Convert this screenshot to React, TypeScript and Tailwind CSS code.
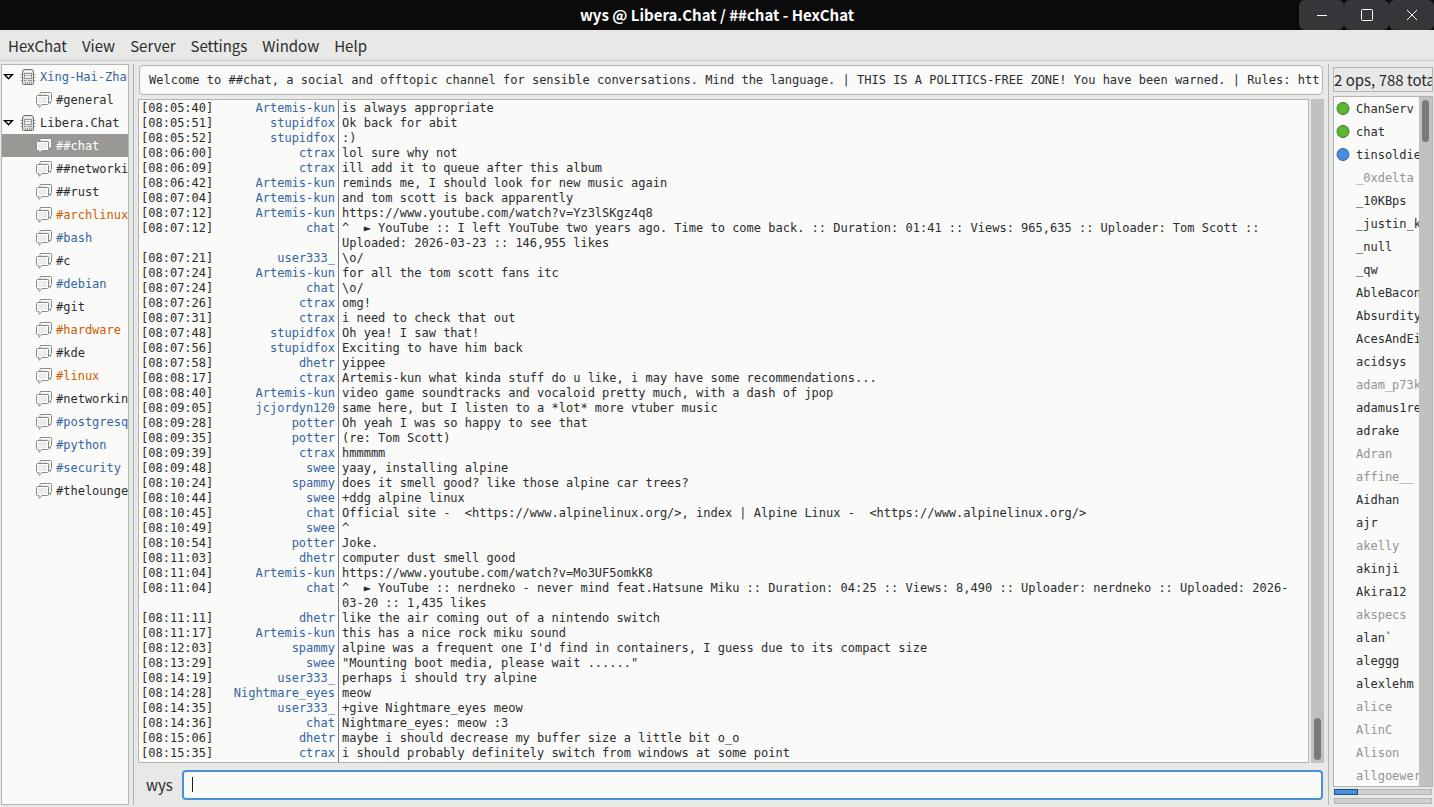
import { useState } from "react";

type Tone = "normal" | "data" | "message" | "selected";
type Channel = { name: string; tone: Tone };
type Network = { name: string; tone: Tone; channels: Channel[] };
type User = { name: string; away?: boolean; badge?: "op" | "voice" };

const toneClass: Record<Tone, string> = {
  normal: "text-[#2a2c2e]",
  data: "text-[#3465a4]",
  message: "text-[#ce5c00]",
  selected: "bg-[#9a9894] text-white",
};

const menus = ["HexChat", "View", "Server", "Settings", "Window", "Help"];

const networks: Network[] = [
  { name: "Xing-Hai-Zhan", tone: "data", channels: [{ name: "#general", tone: "normal" }] },
  {
    name: "Libera.Chat",
    tone: "normal",
    channels: [
      { name: "##chat", tone: "selected" },
      { name: "##networking", tone: "normal" },
      { name: "##rust", tone: "normal" },
      { name: "#archlinux", tone: "message" },
      { name: "#bash", tone: "data" },
      { name: "#c", tone: "normal" },
      { name: "#debian", tone: "data" },
      { name: "#git", tone: "normal" },
      { name: "#hardware", tone: "message" },
      { name: "#kde", tone: "normal" },
      { name: "#linux", tone: "message" },
      { name: "#networking", tone: "normal" },
      { name: "#postgresql", tone: "data" },
      { name: "#python", tone: "data" },
      { name: "#security", tone: "data" },
      { name: "#thelounge", tone: "normal" },
    ],
  },
];

const messages: [string, string, string][] = [
  ["08:05:40", "Artemis-kun", "is always appropriate"],
  ["08:05:51", "stupidfox", "Ok back for abit"],
  ["08:05:52", "stupidfox", ":)"],
  ["08:06:00", "ctrax", "lol sure why not"],
  ["08:06:09", "ctrax", "ill add it to queue after this album"],
  ["08:06:42", "Artemis-kun", "reminds me, I should look for new music again"],
  ["08:07:04", "Artemis-kun", "and tom scott is back apparently"],
  ["08:07:12", "Artemis-kun", "https://www.youtube.com/watch?v=Yz3lSKgz4q8"],
  ["08:07:12", "chat", "^  ► YouTube :: I left YouTube two years ago. Time to come back. :: Duration: 01:41 :: Views: 965,635 :: Uploader: Tom Scott :: Uploaded: 2026-03-23 :: 146,955 likes"],
  ["08:07:21", "user333_", "\\o/"],
  ["08:07:24", "Artemis-kun", "for all the tom scott fans itc"],
  ["08:07:24", "chat", "\\o/"],
  ["08:07:26", "ctrax", "omg!"],
  ["08:07:31", "ctrax", "i need to check that out"],
  ["08:07:48", "stupidfox", "Oh yea! I saw that!"],
  ["08:07:56", "stupidfox", "Exciting to have him back"],
  ["08:07:58", "dhetr", "yippee"],
  ["08:08:17", "ctrax", "Artemis-kun what kinda stuff do u like, i may have some recommendations..."],
  ["08:08:40", "Artemis-kun", "video game soundtracks and vocaloid pretty much, with a dash of jpop"],
  ["08:09:05", "jcjordyn120", "same here, but I listen to a *lot* more vtuber music"],
  ["08:09:28", "potter", "Oh yeah I was so happy to see that"],
  ["08:09:35", "potter", "(re: Tom Scott)"],
  ["08:09:39", "ctrax", "hmmmmm"],
  ["08:09:48", "swee", "yaay, installing alpine"],
  ["08:10:24", "spammy", "does it smell good? like those alpine car trees?"],
  ["08:10:44", "swee", "+ddg alpine linux"],
  ["08:10:45", "chat", "Official site -  <https://www.alpinelinux.org/>, index | Alpine Linux -  <https://www.alpinelinux.org/>"],
  ["08:10:49", "swee", "^"],
  ["08:10:54", "potter", "Joke."],
  ["08:11:03", "dhetr", "computer dust smell good"],
  ["08:11:04", "Artemis-kun", "https://www.youtube.com/watch?v=Mo3UF5omkK8"],
  ["08:11:04", "chat", "^  ► YouTube :: nerdneko - never mind feat.Hatsune Miku :: Duration: 04:25 :: Views: 8,490 :: Uploader: nerdneko :: Uploaded: 2026-03-20 :: 1,435 likes"],
  ["08:11:11", "dhetr", "like the air coming out of a nintendo switch"],
  ["08:11:17", "Artemis-kun", "this has a nice rock miku sound"],
  ["08:12:03", "spammy", "alpine was a frequent one I'd find in containers, I guess due to its compact size"],
  ["08:13:29", "swee", "\"Mounting boot media, please wait ......\""],
  ["08:14:19", "user333_", "perhaps i should try alpine"],
  ["08:14:28", "Nightmare_eyes", "meow"],
  ["08:14:35", "user333_", "+give Nightmare_eyes meow"],
  ["08:14:36", "chat", "Nightmare_eyes: meow :3"],
  ["08:15:06", "dhetr", "maybe i should decrease my buffer size a little bit o_o"],
  ["08:15:35", "ctrax", "i should probably definitely switch from windows at some point"],
];

const users: User[] = [
  { name: "ChanServ", badge: "op" },
  { name: "chat", badge: "op" },
  { name: "tinsoldier", badge: "voice" },
  { name: "_0xdelta", away: true },
  { name: "_10KBps" },
  { name: "_justin_k" },
  { name: "_null" },
  { name: "_qw" },
  { name: "AbleBacon" },
  { name: "Absurdity" },
  { name: "AcesAndEi" },
  { name: "acidsys" },
  { name: "adam_p73k", away: true },
  { name: "adamus1re" },
  { name: "adrake" },
  { name: "Adran", away: true },
  { name: "affine__", away: true },
  { name: "Aidhan" },
  { name: "ajr" },
  { name: "akelly", away: true },
  { name: "akinji" },
  { name: "Akira12" },
  { name: "akspecs", away: true },
  { name: "alan`" },
  { name: "aleggg" },
  { name: "alexlehm" },
  { name: "alice", away: true },
  { name: "AlinC", away: true },
  { name: "Alison", away: true },
  { name: "allgoewer", away: true },
];

function Expander() {
  return (
    <svg className="ml-[1px] h-[10px] w-[11px] shrink-0" viewBox="0 0 11 10" aria-hidden="true">
      <path d="M1.6 2.6h7.8L5.5 6.8z" fill="#fff" stroke="#000" strokeWidth="1.4" />
    </svg>
  );
}

function ServerIcon() {
  return (
    <svg className="h-4 w-4 shrink-0" viewBox="0 0 16 16" fill="none" aria-hidden="true">
      <path d="M.5 5.5H2M14 5.5h1.5M.5 8.5H2M14 8.5h1.5M.5 11.5H2M14 11.5h1.5" stroke="#a4a6a2" />
      <path d="M2.5 3a2.5 2.5 0 0 1 2.5-2.5h6A2.5 2.5 0 0 1 13.5 3v11.5a1 1 0 0 1-1 1h-9a1 1 0 0 1-1-1z" fill="#dededc" stroke="#6c6e6a" />
      <path d="M4 2.5h8" stroke="#f8f8f7" />
      <rect x="4.5" y="4.5" width="7" height="5" fill="#f1f1ef" stroke="#969894" />
      <path d="M5 6.5h6" stroke="#b4b6b2" />
      <path d="M4 11.5h2M8 11.5h4" stroke="#8c8e8a" />
      <path d="M5.5 13v2M7.5 13v2M9.5 13v2M11.5 13v2" stroke="#a0a29e" />
    </svg>
  );
}

function ChannelIcon() {
  return (
    <svg className="h-4 w-4 shrink-0" viewBox="0 0 16 16" aria-hidden="true">
      <path d="M5 .5h9.5a1 1 0 0 1 1 1v7a1 1 0 0 1-1 1v2l-2-2H5a1 1 0 0 1-1-1v-7a1 1 0 0 1 1-1z" fill="#fff" stroke="#888a85" />
      <path d="M5.5 2h8.5v6H5.5z" fill="#e9e9e7" />
      <path d="M1.5 3.5h10a1 1 0 0 1 1 1v7a1 1 0 0 1-1 1H6l-3 2.8v-2.8H1.5a1 1 0 0 1-1-1v-7a1 1 0 0 1 1-1z" fill="#fff" stroke="#888a85" />
      <path d="M2 5h9v6H2z" fill="#ececea" />
    </svg>
  );
}

function Badge({ kind }: { kind: "op" | "voice" }) {
  return (
    <svg className="h-[14px] w-[14px]" viewBox="0 0 14 14" aria-hidden="true">
      <circle
        cx="7"
        cy="6.5"
        r="6"
        fill={kind === "op" ? "#5cb531" : "#478ddf"}
        stroke={kind === "op" ? "#3f7a26" : "#3866a0"}
      />
    </svg>
  );
}

function TitleBar() {
  const button = "flex h-[30px] w-[45px] items-center justify-center rounded-md bg-[#36373b]";
  return (
    <header className="grid h-[30px] shrink-0 grid-cols-[1fr_auto_1fr] items-center bg-[#0b0b0b] text-white">
      <h1 className="col-start-2 text-[15px] font-bold">wys @ Libera.Chat / ##chat - HexChat</h1>
      <div className="flex justify-end">
        <button className={button} aria-label="Minimize">
          <svg className="h-3 w-3" viewBox="0 0 12 12" stroke="currentColor">
            <path d="M1 6.5h10" />
          </svg>
        </button>
        <button className={button} aria-label="Maximize">
          <svg className="h-3 w-3" viewBox="0 0 12 12" fill="none" stroke="currentColor">
            <rect x=".5" y=".5" width="11" height="11" rx="1" />
          </svg>
        </button>
        <button className={button} aria-label="Close">
          <svg className="h-3 w-3" viewBox="0 0 12 12" stroke="currentColor">
            <path d="M1 1l10 10M11 1L1 11" />
          </svg>
        </button>
      </div>
    </header>
  );
}

function ChannelTree() {
  return (
    <nav className="w-32 shrink-0 overflow-hidden border border-[#b3b5b2] bg-[#fafaf8] font-[DejaVu_Sans_Mono,monospace] text-xs whitespace-nowrap">
      {networks.map((n) => (
        <div key={n.name}>
          <div className={`flex h-[23px] items-center ${toneClass[n.tone]}`}>
            <Expander />
            <span className="ml-[6px] flex items-center gap-1">
              <ServerIcon />
              {n.name}
            </span>
          </div>
          {n.channels.map((c) => (
            <div key={c.name} className={`flex h-[23px] items-center gap-1 pl-[34px] ${toneClass[c.tone]}`}>
              <ChannelIcon />
              {c.name}
            </div>
          ))}
        </div>
      ))}
    </nav>
  );
}

function ChatLog() {
  return (
    <div className="flex min-h-0 flex-1 gap-[2px]">
      <div className="flex min-w-0 flex-1 flex-col overflow-hidden border border-[#b3b5b2] bg-[#fafaf8] text-xs leading-[15px]">
        {messages.map(([time, nick, text], i) => (
          <div key={i} className="flex shrink-0 last:flex-1 first:[&>span]:pt-[1px]">
            <span className="w-[71px] shrink-0 pl-[2px]">[{time}]</span>
            <span className="w-[129px] shrink-0 border-r border-[#77758c] pr-[3px] text-right text-[#3465a4]">{nick}</span>
            <span className="min-w-0 flex-1 pr-3 pl-[3px] whitespace-pre-wrap">{text}</span>
          </div>
        ))}
      </div>
      <div className="flex w-[13px] flex-col justify-end bg-[#c0c2c0] px-[3px] pb-[3px]">
        <div className="h-[42px] rounded-full bg-[#777b7c]" />
      </div>
    </div>
  );
}

function UserList() {
  return (
    <aside className="flex w-[100px] shrink-0 flex-col">
      <div className="mt-[3px] h-[25px] shrink-0 overflow-hidden border border-[#b3b5b2] text-[15px] leading-6 whitespace-nowrap">
        2 ops, 788 total
      </div>
      <div className="mt-1 flex min-h-0 flex-1 border border-[#b3b5b2]">
        <ul className="min-w-0 flex-1 overflow-hidden bg-[#fafaf8] font-[DejaVu_Sans_Mono,monospace] text-xs whitespace-nowrap">
          {users.map((u) => (
            <li key={u.name} className={`flex h-[23px] items-center ${u.away ? "text-[#92948f]" : ""}`}>
              <span className="ml-[2px] w-5 shrink-0">{u.badge && <Badge kind={u.badge} />}</span>
              {u.name}
            </li>
          ))}
        </ul>
        <div className="w-[13px] bg-[#c0c2c0] px-[3px] pt-[3px]">
          <div className="h-[42px] rounded-full bg-[#777b7c]" />
        </div>
      </div>
      <div className="mx-[1px] mt-[2px] h-[6px] shrink-0 border border-[#b3b5b2] bg-[#cfd0ce]">
        <div className="-mt-[1px] -ml-[1px] h-[6px] w-6 border border-[#1c5187] bg-[#4a90d9]" />
      </div>
      <div className="mx-[1px] mt-[3px] mb-[1px] h-[6px] shrink-0 border border-[#b3b5b2] bg-[#cfd0ce]" />
    </aside>
  );
}

export default function App() {
  const [draft, setDraft] = useState("");

  return (
    <div className="flex h-screen flex-col overflow-hidden bg-[#e8e8e6] font-[Noto_Sans_CJK_SC,sans-serif] text-[#2a2c2e]">
      <TitleBar />
      <nav className="flex h-[31px] shrink-0 items-center gap-[15px] border-b border-[#c9cac8] px-2 pt-[2px] text-[15px]">
        {menus.map((m) => (
          <button key={m}>{m}</button>
        ))}
      </nav>
      <main className="flex min-h-0 flex-1 gap-1 px-[1px] pt-[3px] pb-[2px]">
        <ChannelTree />
        <div className="w-[1px] bg-[#b3b5b2]" />
        <section className="flex min-w-0 flex-1 flex-col font-[DejaVu_Sans_Mono,monospace]">
          <input
            aria-label="Topic"
            readOnly
            value="Welcome to ##chat, a social and offtopic channel for sensible conversations. Mind the language. | THIS IS A POLITICS-FREE ZONE! You have been warned. | Rules: https://policies.example"
            className="mx-[1px] mt-[1px] mb-1 h-[30px] shrink-0 rounded border border-[#b3b5b2] bg-[#fafaf8] pr-[2px] pl-[9px] text-xs"
          />
          <ChatLog />
          <div className="mt-[7px] mb-[5px] flex h-[30px] shrink-0 items-center px-[1px]">
            <label htmlFor="entry" className="w-[43px] pl-[7px] font-[Noto_Sans_CJK_SC,sans-serif] text-[15px]">
              wys
            </label>
            <div className="relative h-full min-w-0 flex-1">
              <input
                id="entry"
                value={draft}
                onChange={(e) => setDraft(e.target.value)}
                className="h-full w-full rounded border-2 border-[#4a90d9] bg-[#fafaf8] px-2 text-xs outline-none"
              />
              {draft === "" && (
                <span className="pointer-events-none absolute top-[7px] left-[10px] h-[15px] w-[1px] bg-[#1c1e20]" />
              )}
            </div>
          </div>
        </section>
        <div className="w-[1px] bg-[#b3b5b2]" />
        <UserList />
      </main>
    </div>
  );
}
